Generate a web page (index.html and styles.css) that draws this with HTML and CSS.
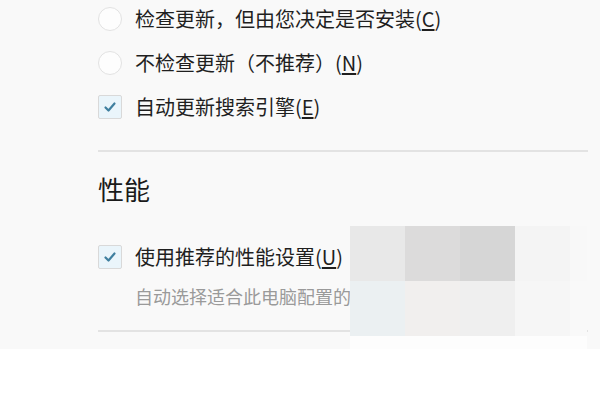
FILE: index.html
```html
<!DOCTYPE html>
<html lang="zh-CN">

<head>
    <meta charset="UTF-8">
    <meta name="viewport" content="width=device-width, initial-scale=1.0">
    <title>选项</title>
    <link rel="stylesheet" href="styles.css">
</head>

<body>
    <div class="panel">
        <!-- 更新 -->
        <div class="group">
            <div class="row">
                <span class="radio"></span>
                <span class="label">检查更新，但由您决定是否安装(<u>C</u>)</span>
            </div>
            <div class="row">
                <span class="radio"></span>
                <span class="label">不检查更新（不推荐）(<u>N</u>)</span>
            </div>
            <div class="row">
                <span class="check">
                    <svg viewBox="0 0 24 24" width="24" height="24"><path d="M7.5 12.5 L10.5 15.5 L16.5 8.5" fill="none" stroke="#3f7f9f" stroke-width="2.2" stroke-linecap="round" stroke-linejoin="round"/></svg>
                </span>
                <span class="label">自动更新搜索引擎(<u>E</u>)</span>
            </div>
        </div>
        <hr class="divider">

        <!-- 性能 -->
        <h2 class="title">性能</h2>
        <div class="row">
            <span class="check">
                <svg viewBox="0 0 24 24" width="24" height="24"><path d="M7.5 12.5 L10.5 15.5 L16.5 8.5" fill="none" stroke="#3f7f9f" stroke-width="2.2" stroke-linecap="round" stroke-linejoin="round"/></svg>
            </span>
            <span class="label">使用推荐的性能设置(<u>U</u>)</span>
        </div>
        <p class="desc">自动选择适合此电脑配置的</p>
        <hr class="divider short">

        <!-- 马赛克 -->
        <div class="mosaic">
            <i style="background:#e8e8e8"></i><i style="background:#dcdbdb"></i><i style="background:#d6d6d6"></i><i style="background:#f4f4f4"></i><i style="background:#f8f8f8"></i>
            <i style="background:#ebf0f2"></i><i style="background:#f1efee"></i><i style="background:#efefef"></i><i style="background:#f6f6f6"></i><i style="background:#f9f9f9"></i>
            <i style="background:#fdfdfd"></i><i style="background:#fdfdfd"></i><i style="background:#fdfdfd"></i><i style="background:#fdfdfd"></i><i style="background:#fdfdfd"></i>
        </div>
    </div>
</body>

</html>
```

FILE: styles.css
```css
html,
body {
    margin: 0;
    background: #fff;
    font-family: "Noto Sans CJK SC", "Noto Sans", sans-serif;
    color: #1f1f1f;
}

.panel {
    position: relative;
    height: 349px;
    background: #f9f9f9;
    padding-left: 98px;
    padding-right: 12px;
    box-sizing: border-box;
    overflow: hidden;
}

.group {
    margin-top: -3px;
}

.row {
    display: flex;
    align-items: center;
    height: 44px;
}

.radio {
    width: 22px;
    height: 22px;
    border: 1px solid #e2e2e2;
    border-radius: 50%;
    background: #fdfdfd;
    flex: none;
}

.check {
    width: 22px;
    height: 22px;
    border: 1px solid #d9d9d9;
    border-radius: 2px;
    background: #eaf5fb;
    flex: none;
    display: flex;
}

.check svg {
    margin: -1px;
}

.label {
    margin-left: 13px;
    font-size: 20px;
    line-height: 1;
}

.label u {
    text-underline-offset: 2px;
}

.divider {
    margin: 21px 0 0;
    border: 0;
    height: 2px;
    background: #e3e3e3;
}

.divider.short {
    margin-top: 22px;
}

.title {
    margin: 20px 0 29px;
    font-size: 26px;
    font-weight: 400;
    line-height: 34px;
    color: #1a1a1a;
}

.desc {
    margin: 5px 0 0 37px;
    font-size: 18px;
    line-height: 24px;
    color: #9a9a9a;
}

.mosaic {
    position: absolute;
    left: 350px;
    top: 226px;
    display: grid;
    grid-template-columns: 55px 55px 55px 55px 17px;
    grid-template-rows: 55px 55px 55px;
}

.mosaic i {
    display: block;
}
```
